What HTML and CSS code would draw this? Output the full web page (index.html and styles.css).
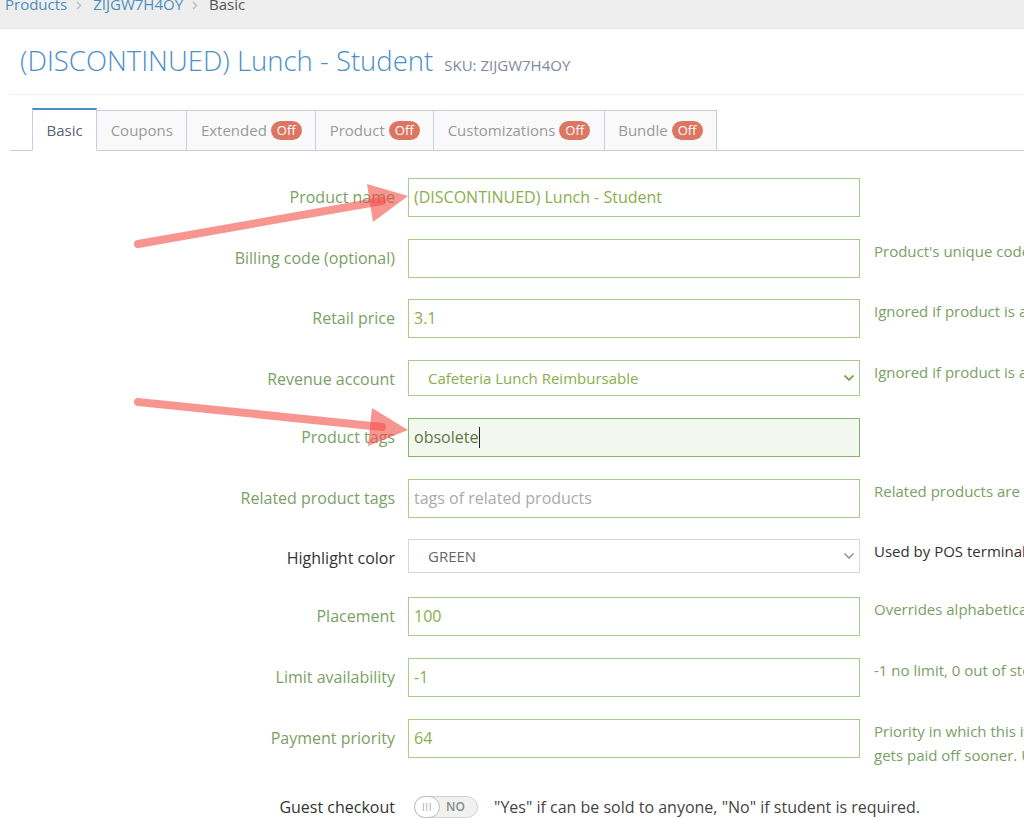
FILE: index.html
```html
<!DOCTYPE html>
<html lang="en">
<head>
<meta charset="utf-8">
<title>Product - Basic</title>
<link rel="stylesheet" href="styles.css">
</head>
<body>
<div class="crumbs">
  <ul class="crumb-list">
    <li><a class="crumb-link">Products</a></li>
    <li class="sep"><svg width="6" height="9" viewBox="0 0 6 9"><path d="M1 1l3.5 3.5L1 8" fill="none" stroke="#b7bcc4" stroke-width="1.4"/></svg></li>
    <li><a class="crumb-link">ZIJGW7H4OY</a></li>
    <li class="sep"><svg width="6" height="9" viewBox="0 0 6 9"><path d="M1 1l3.5 3.5L1 8" fill="none" stroke="#b7bcc4" stroke-width="1.4"/></svg></li>
    <li class="crumb-current">Basic</li>
  </ul>
</div>
<div class="page">
  <div class="page-header">
    <h1 class="title">(DISCONTINUED) Lunch - Student<small class="sku">SKU: ZIJGW7H4OY</small></h1>
  </div>
  <ul class="tabs">
    <li class="tab active">Basic</li>
    <li class="tab">Coupons</li>
    <li class="tab">Extended<span class="badge">Off</span></li>
    <li class="tab">Product<span class="badge">Off</span></li>
    <li class="tab">Customizations<span class="badge">Off</span></li>
    <li class="tab">Bundle<span class="badge">Off</span></li>
  </ul>
  <div class="form">
    <div class="row">
      <div class="label">Product name</div>
      <div class="field">(DISCONTINUED) Lunch - Student</div>
      <div class="help"></div>
    </div>
    <div class="row">
      <div class="label">Billing code (optional)</div>
      <div class="field"></div>
      <div class="help">Product's unique code used for billing exports.</div>
    </div>
    <div class="row">
      <div class="label">Retail price</div>
      <div class="field">3.1</div>
      <div class="help">Ignored if product is a bundle.</div>
    </div>
    <div class="row row-select">
      <div class="label">Revenue account</div>
      <div class="field select">
        <span>Cafeteria Lunch Reimbursable</span>
        <svg class="chev" width="12" height="8" viewBox="0 0 12 8"><path d="M1.5 1.5L6 6l4.5-4.5" fill="none" stroke="#7ba65a" stroke-width="1.8"/></svg>
      </div>
      <div class="help">Ignored if product is a bundle.</div>
    </div>
    <div class="row">
      <div class="label">Product tags</div>
      <div class="field focused">obsolete<span class="caret"></span></div>
      <div class="help"></div>
    </div>
    <div class="row">
      <div class="label">Related product tags</div>
      <div class="field placeholder">tags of related products</div>
      <div class="help">Related products are displayed together.</div>
    </div>
    <div class="row row-select">
      <div class="label dark">Highlight color</div>
      <div class="field select plain">
        <span>GREEN</span>
        <svg class="chev" width="12" height="8" viewBox="0 0 12 8"><path d="M1.5 1.5L6 6l4.5-4.5" fill="none" stroke="#8a8a8a" stroke-width="1.4"/></svg>
      </div>
      <div class="help dark">Used by POS terminals.</div>
    </div>
    <div class="row">
      <div class="label">Placement</div>
      <div class="field">100</div>
      <div class="help">Overrides alphabetical sorting.</div>
    </div>
    <div class="row">
      <div class="label">Limit availability</div>
      <div class="field">-1</div>
      <div class="help">-1 no limit, 0 out of stock.</div>
    </div>
    <div class="row">
      <div class="label">Payment priority</div>
      <div class="field">64</div>
      <div class="help">Priority in which this item is paid. A higher priority item<br>gets paid off sooner. Use 0 for the lowest priority.</div>
    </div>
    <div class="guest">
      <div class="label dark">Guest checkout</div>
      <div class="guest-body">
        <div class="switch"><span class="knob">III</span><span class="switch-text">NO</span></div>
        <div class="guest-help">"Yes" if can be sold to anyone, "No" if student is required.</div>
      </div>
    </div>
  </div>
</div>
<svg class="arrows" width="1024" height="818" viewBox="0 0 1024 818">
  <g fill="rgba(242,80,72,0.6)" stroke="none">
    <polygon points="408,196 367,184 373,222"/>
    <polygon points="408,430 372,408 368,446"/>
  </g>
  <g stroke="rgba(242,80,72,0.6)" stroke-width="8" stroke-linecap="round" fill="none">
    <line x1="138" y1="244" x2="382" y2="201"/>
    <line x1="138" y1="402" x2="382" y2="427"/>
  </g>
</svg>
</body>
</html>
```

FILE: styles.css
```css
html, body {
  margin: 0;
  padding: 0;
  overflow: hidden;
}
body {
  font-family: "Open Sans", "DejaVu Sans", sans-serif;
  font-size: 15px;
  color: #393939;
  background: #fff;
  position: relative;
  width: 1024px;
  height: 818px;
}

/* breadcrumbs */
.crumbs {
  display: flex;
  align-items: flex-start;
  background: #eeeeee;
  height: 28px;
  border-bottom: 1px solid #e6e6e6;
}
.crumb-list {
  display: flex;
  align-items: center;
  list-style: none;
  margin: -6px 0 0 0;
  padding: 0 0 0 5px;
  line-height: 20px;
}
.crumb-link {
  color: #4c8fbd;
}
.crumb-current {
  color: #555;
}
.sep {
  display: flex;
  align-items: center;
  padding: 2px 11px 0 9px;
}

/* page */
.page {
  padding-left: 10px;
}
.page-header {
  padding: 14px 0 11px 10px;
  border-bottom: 1px dotted #e2e2e2;
}
.title {
  margin: 0;
  font-size: 27.5px;
  font-weight: 300;
  line-height: 36px;
  color: #4a8fcb;
}
.sku {
  margin-left: 11px;
  font-size: 15px;
  font-weight: 400;
  color: #8089a0;
}

/* tabs */
.tabs {
  display: flex;
  align-items: flex-end;
  list-style: none;
  margin: 15px 0 0 0;
  padding: 0 0 0 22px;
  border-bottom: 1px solid #c5d0dc;
  height: 40px;
}
.tab {
  display: flex;
  align-items: center;
  gap: 4px;
  padding: 9px 13.5px 10px;
  line-height: 20px;
  border: 1px solid #c5d0dc;
  margin: 0 -1px -1px 0;
  background: #f9f9f9;
  color: #999;
}
.tab.active {
  position: relative;
  z-index: 1;
  padding-top: 10px;
  border-top: 2px solid #4c8fbd;
  border-bottom-color: #fff;
  background: #fff;
  color: #576373;
}
.badge {
  display: inline-block;
  height: 19px;
  line-height: 19px;
  padding: 0 6px;
  border-radius: 10px;
  background: #dc7663;
  color: #fff;
  font-size: 13px;
}

/* form */
.form {
  margin-top: 27px;
}
.row {
  display: grid;
  grid-template-columns: 385px 452px 400px;
  column-gap: 13px;
  height: 60.7px;
  align-items: start;
}
.row.row-select {
  height: 58px;
}
.label {
  text-align: right;
  line-height: 39px;
  font-size: 16px;
  color: #7ba065;
  white-space: nowrap;
}
.label.dark {
  color: #333;
}
.field {
  box-sizing: border-box;
  height: 39px;
  border: 1px solid #a5cc88;
  padding: 0 5px;
  line-height: 37px;
  font-size: 16px;
  color: #8bad4c;
  background: #fff;
  white-space: nowrap;
  overflow: hidden;
}
.field.placeholder {
  color: #aaa;
}
.field.focused {
  background: #f2f8ee;
  border-color: #85b46a;
  color: #5f7448;
  display: flex;
  align-items: center;
}
.caret {
  display: inline-block;
  width: 1px;
  height: 21px;
  background: #222;
  margin-left: 1px;
}
.field.select {
  height: 36px;
  line-height: 34px;
  font-size: 15px;
  display: flex;
  align-items: center;
  justify-content: space-between;
  padding: 0 4px 0 19px;
}
.field.select.plain {
  height: 34px;
  line-height: 32px;
  border-color: #d8d8d8;
  color: #666;
}
.chev {
  display: block;
}
.help {
  margin-left: 1px;
  line-height: 24px;
  color: #7ba065;
  white-space: nowrap;
}
.help.dark {
  color: #333;
}

/* guest checkout */
.guest {
  display: grid;
  grid-template-columns: 385px auto;
  column-gap: 13px;
  align-items: center;
  margin-top: 16px;
  height: 22px;
}
.guest .label {
  line-height: 22px;
}
.guest-body {
  display: flex;
  align-items: center;
  gap: 16px;
  padding-left: 6px;
}
.guest-help {
  font-size: 16px;
  line-height: 22px;
  color: #444;
  white-space: nowrap;
}
.switch {
  box-sizing: border-box;
  width: 64px;
  height: 22px;
  border: 1px solid #d4d4d4;
  border-radius: 12px;
  background: #f1f1f1;
  display: flex;
  align-items: center;
}
.knob {
  box-sizing: border-box;
  width: 26px;
  height: 22px;
  margin-left: -1px;
  border: 1px solid #bdbdbd;
  border-radius: 11px;
  background: #fff;
  color: #aaa;
  font-size: 10px;
  line-height: 20px;
  text-align: center;
  letter-spacing: 0.5px;
}
.switch-text {
  margin-left: 6px;
  font-size: 12px;
  font-weight: 600;
  color: #8a8a8a;
}

/* annotation arrows */
.arrows {
  position: absolute;
  top: 0;
  left: 0;
  pointer-events: none;
}
```
